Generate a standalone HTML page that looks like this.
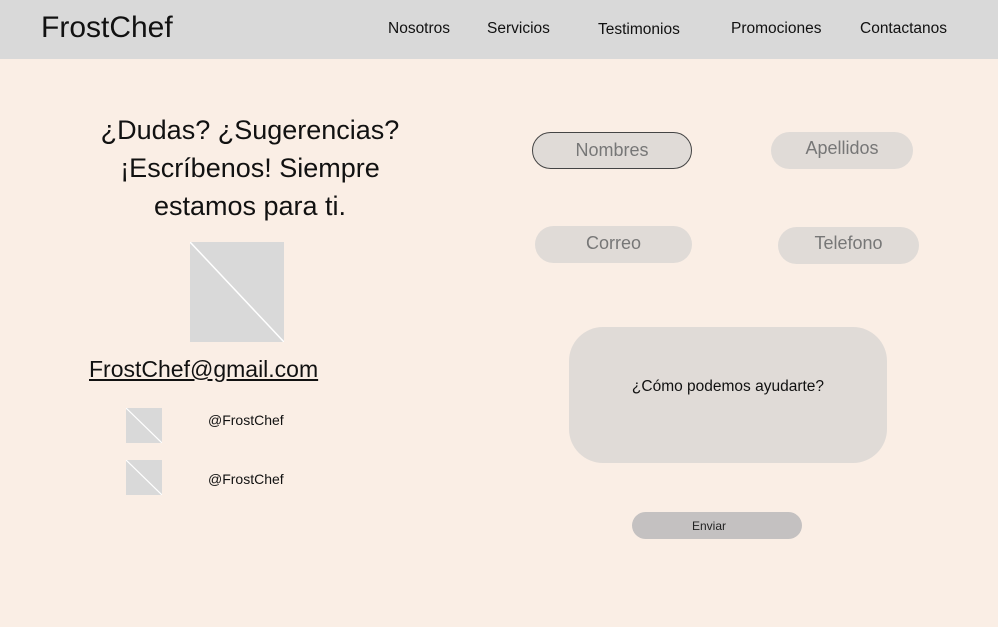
<!DOCTYPE html>
<html><head><meta charset="utf-8"><style>
*{margin:0;padding:0;box-sizing:border-box}
body{width:998px;height:627px;background:#faeee5;font-family:"Liberation Sans",sans-serif;position:relative;overflow:hidden;color:#111}
.hdr{position:absolute;left:0;top:0;width:998px;height:59px;background:#d9d9d9}
.a{position:absolute;white-space:nowrap}
.nav{font-size:15.5px;top:20px}
.pill{position:absolute;background:#e0dbd7;border-radius:19px;color:#777;font-size:18px;text-align:center}
.img{position:absolute;background:#d9d9d9;overflow:hidden}
.img svg{position:absolute;left:0;top:0;width:100%;height:100%}
</style></head><body>
<div class="hdr"></div>
<div class="a" style="left:41px;top:11px;font-size:30px">FrostChef</div>
<div class="a nav" style="left:388px">Nosotros</div>
<div class="a nav" style="left:487px">Servicios</div>
<div class="a nav" style="left:598px;top:21px">Testimonios</div>
<div class="a nav" style="left:731px">Promociones</div>
<div class="a nav" style="left:860px">Contactanos</div>

<div class="a" style="left:50px;width:400px;top:111px;text-align:center;font-size:27px;line-height:38px">¿Dudas? ¿Sugerencias?<br>¡Escríbenos! Siempre<br>estamos para ti.</div>

<div class="img" style="left:190px;top:242px;width:94px;height:100px"><svg viewBox="0 0 94 100" preserveAspectRatio="none"><line x1="0" y1="0" x2="94" y2="100" stroke="#fff" stroke-width="1.5"/></svg></div>

<div class="a" style="left:89px;top:356px;font-size:23px;text-decoration:underline">FrostChef@gmail.com</div>

<div class="img" style="left:126px;top:408px;width:36px;height:35px"><svg viewBox="0 0 36 35" preserveAspectRatio="none"><line x1="0" y1="0" x2="36" y2="35" stroke="#fff" stroke-width="1.2"/></svg></div>
<div class="a" style="left:208px;top:412px;font-size:14px">@FrostChef</div>
<div class="img" style="left:126px;top:460px;width:36px;height:35px"><svg viewBox="0 0 36 35" preserveAspectRatio="none"><line x1="0" y1="0" x2="36" y2="35" stroke="#fff" stroke-width="1.2"/></svg></div>
<div class="a" style="left:208px;top:471px;font-size:14px">@FrostChef</div>

<div class="pill" style="left:532px;top:132px;width:160px;height:37px;border:1px solid #444;line-height:35px">Nombres</div>
<div class="pill" style="left:771px;top:132px;width:142px;height:37px;line-height:32px">Apellidos</div>
<div class="pill" style="left:535px;top:226px;width:157px;height:37px;line-height:34px">Correo</div>
<div class="pill" style="left:778px;top:227px;width:141px;height:37px;line-height:32px">Telefono</div>

<div class="pill" style="left:569px;top:327px;width:318px;height:136px;border-radius:34px;color:#111;font-size:15.5px;padding-top:51px">¿Cómo podemos ayudarte?</div>

<div class="pill" style="left:632px;top:512px;width:170px;height:27px;background:#c4c1c1;color:#222;font-size:12px;line-height:28px;border-radius:14px;padding-right:16px">Enviar</div>
</body></html>
